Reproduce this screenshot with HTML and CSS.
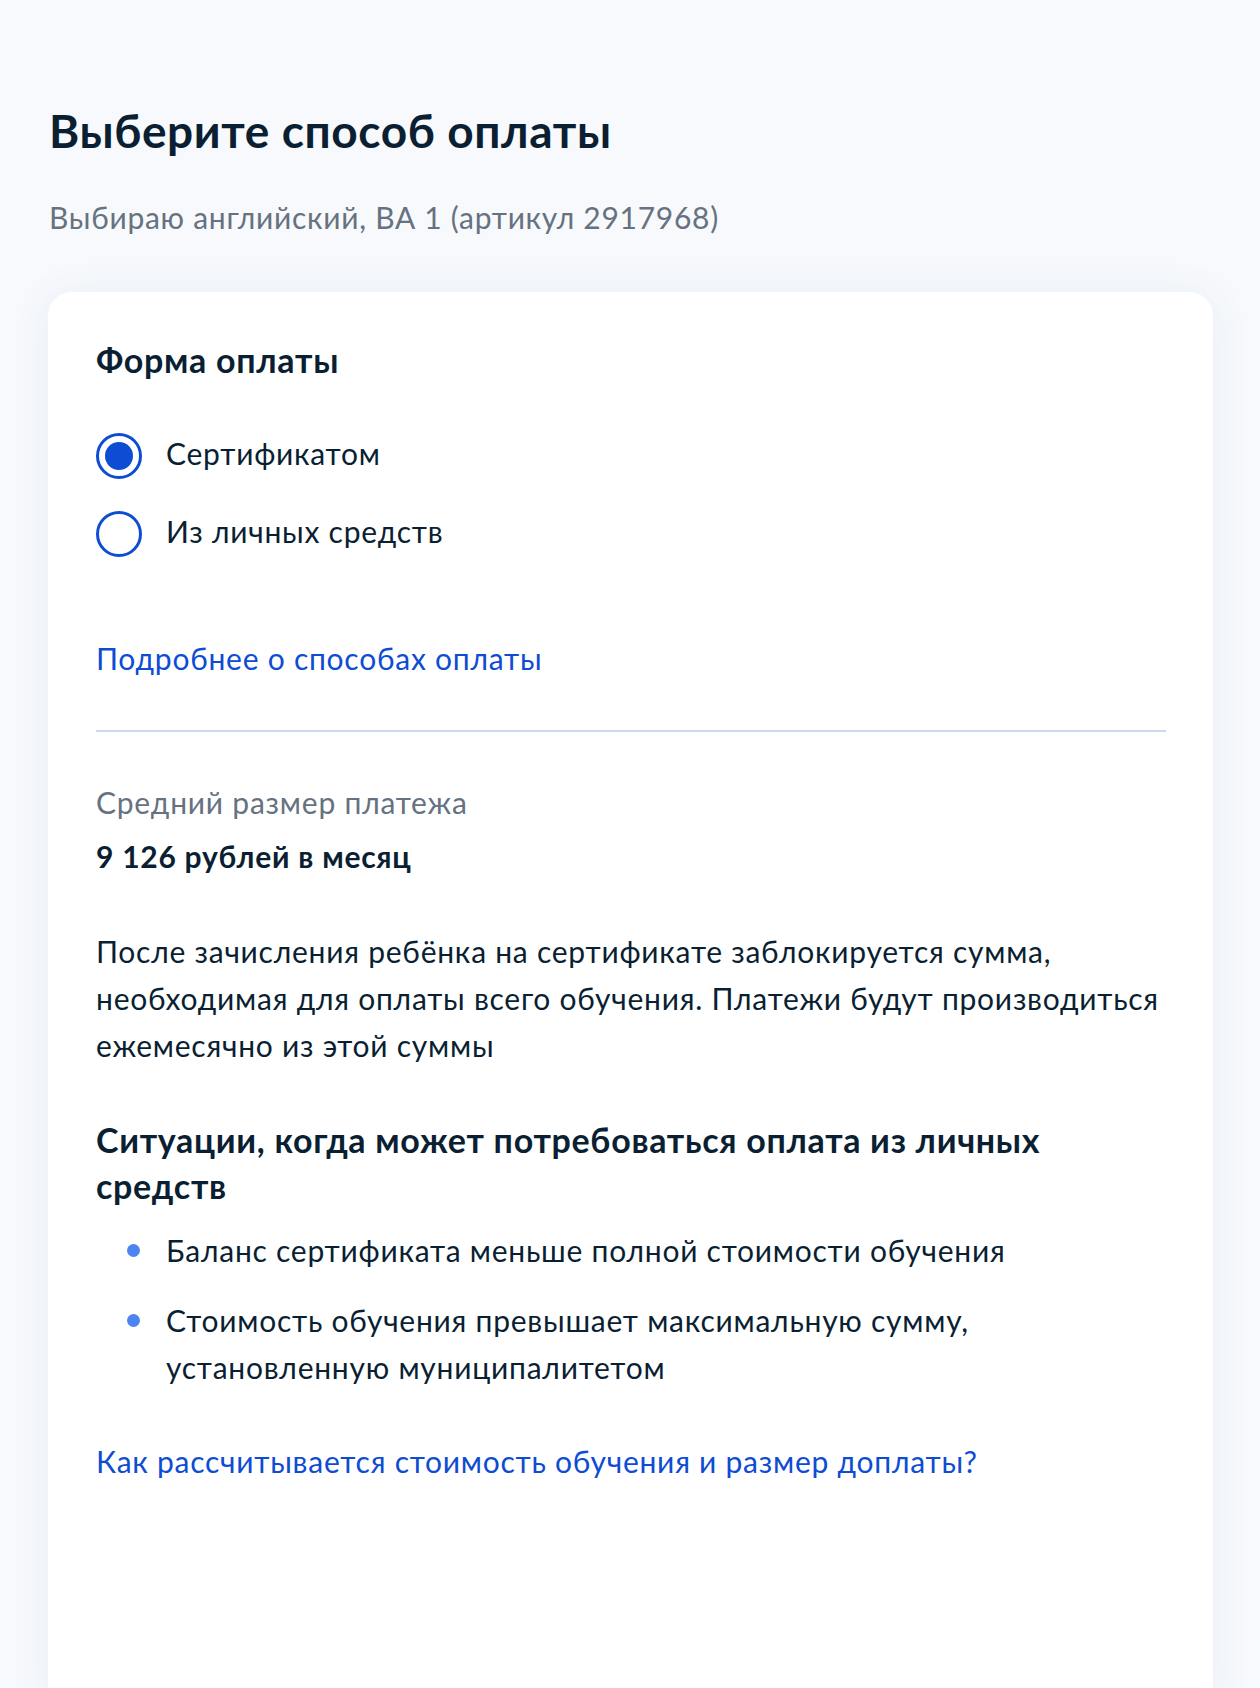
FILE: index.html
```html
<!DOCTYPE html>
<html lang="ru">
<head>
<meta charset="utf-8">
<title>Выберите способ оплаты</title>
<link rel="stylesheet" href="styles.css">
</head>
<body>
<main class="page">
  <h1 class="title">Выберите способ оплаты</h1>
  <p class="subtitle">Выбираю английский, ВА 1 (артикул 2917968)</p>
  <section class="card">
    <h2 class="card-heading">Форма оплаты</h2>
    <div class="radios">
      <label class="radio">
        <span class="radio-circle radio-circle--checked"></span>
        <span class="radio-label">Сертификатом</span>
      </label>
      <label class="radio">
        <span class="radio-circle"></span>
        <span class="radio-label">Из личных средств</span>
      </label>
    </div>
    <a class="link link--details" href="#">Подробнее о способах оплаты</a>
    <hr class="divider">
    <p class="muted">Средний размер платежа</p>
    <p class="amount">9 126 рублей в месяц</p>
    <p class="text">После зачисления ребёнка на сертификате заблокируется сумма, необходимая для оплаты всего обучения. Платежи будут производиться ежемесячно из этой суммы</p>
    <h3 class="sub-heading">Ситуации, когда может потребоваться оплата из личных средств</h3>
    <ul class="bullets">
      <li class="bullet">Баланс сертификата меньше полной стоимости обучения</li>
      <li class="bullet">Стоимость обучения превышает максимальную сумму, установленную муниципалитетом</li>
    </ul>
    <a class="link link--calc" href="#">Как рассчитывается стоимость обучения и размер доплаты?</a>
  </section>
</main>
</body>
</html>
```

FILE: styles.css
```css
* { box-sizing: border-box; }
html, body { margin: 0; padding: 0; }
body {
  background: #f7f9fc;
  font-family: Lato, "Noto Sans", sans-serif;
  color: #0b1f33;
  height: 1688px;
  overflow: hidden;
}
.page {
  padding: 103px 47px 0 48px;
}
.title {
  margin: 0;
  font-size: 46px;
  line-height: 56px;
  font-weight: 700;
  letter-spacing: 0.6px;
  color: #0b1f33;
  padding-left: 1px;
}
.subtitle {
  margin: 38px 0 0;
  font-size: 30px;
  line-height: 40px;
  letter-spacing: 0.72px;
  color: #66727f;
  padding-left: 1px;
}
.card {
  margin-top: 55px;
  background: #fff;
  border-radius: 24px;
  padding: 48px 47px 100px 48px;
  box-shadow: 0 2px 40px rgba(40, 80, 170, 0.07);
  min-height: 1420px;
}
.card-heading {
  margin: 0;
  font-size: 34px;
  line-height: 40px;
  font-weight: 700;
  letter-spacing: 0.7px;
}
.radios {
  margin-top: 53px;
  display: flex;
  flex-direction: column;
  gap: 32px;
}
.radio {
  display: flex;
  align-items: center;
  gap: 24px;
  height: 46px;
}
.radio-circle {
  width: 46px;
  height: 46px;
  border-radius: 50%;
  border: 3px solid #0d4cd3;
  flex: none;
  position: relative;
}
.radio-circle--checked::after {
  content: "";
  position: absolute;
  left: 6px;
  top: 6px;
  width: 28px;
  height: 28px;
  border-radius: 50%;
  background: #0d4cd3;
}
.radio-label {
  font-size: 30px;
  line-height: 40px;
  letter-spacing: 0.75px;
  padding-bottom: 6px;
}
.link {
  display: block;
  color: #0d4cd3;
  text-decoration: none;
  font-size: 30px;
  line-height: 40px;
  letter-spacing: 0.75px;
}
.link--details { margin-top: 81px; }
.divider {
  margin: 52px 0 0;
  border: 0;
  height: 2px;
  background: #cdd9f1;
}
.muted {
  margin: 50px 0 0;
  font-size: 30px;
  line-height: 40px;
  letter-spacing: 0.78px;
  color: #66727f;
}
.amount {
  margin: 14px 0 0;
  font-size: 30px;
  line-height: 40px;
  letter-spacing: 0.74px;
  font-weight: 700;
}
.text {
  margin: 52px 0 0;
  font-size: 30px;
  line-height: 47px;
  letter-spacing: 0.75px;
}
.sub-heading {
  margin: 48px 0 0;
  font-size: 34px;
  line-height: 46px;
  font-weight: 700;
  letter-spacing: 0.7px;
}
.bullets {
  margin: 18px 0 0;
  padding: 0 0 0 70px;
  list-style: none;
  display: flex;
  flex-direction: column;
  gap: 23px;
}
.bullet {
  position: relative;
  font-size: 30px;
  line-height: 47px;
  letter-spacing: 0.75px;
}
.bullet::before {
  content: "";
  position: absolute;
  left: -39px;
  top: 17px;
  width: 13px;
  height: 13px;
  border-radius: 50%;
  background: #4c84f0;
}
.link--calc { margin-top: 50px; }
```
